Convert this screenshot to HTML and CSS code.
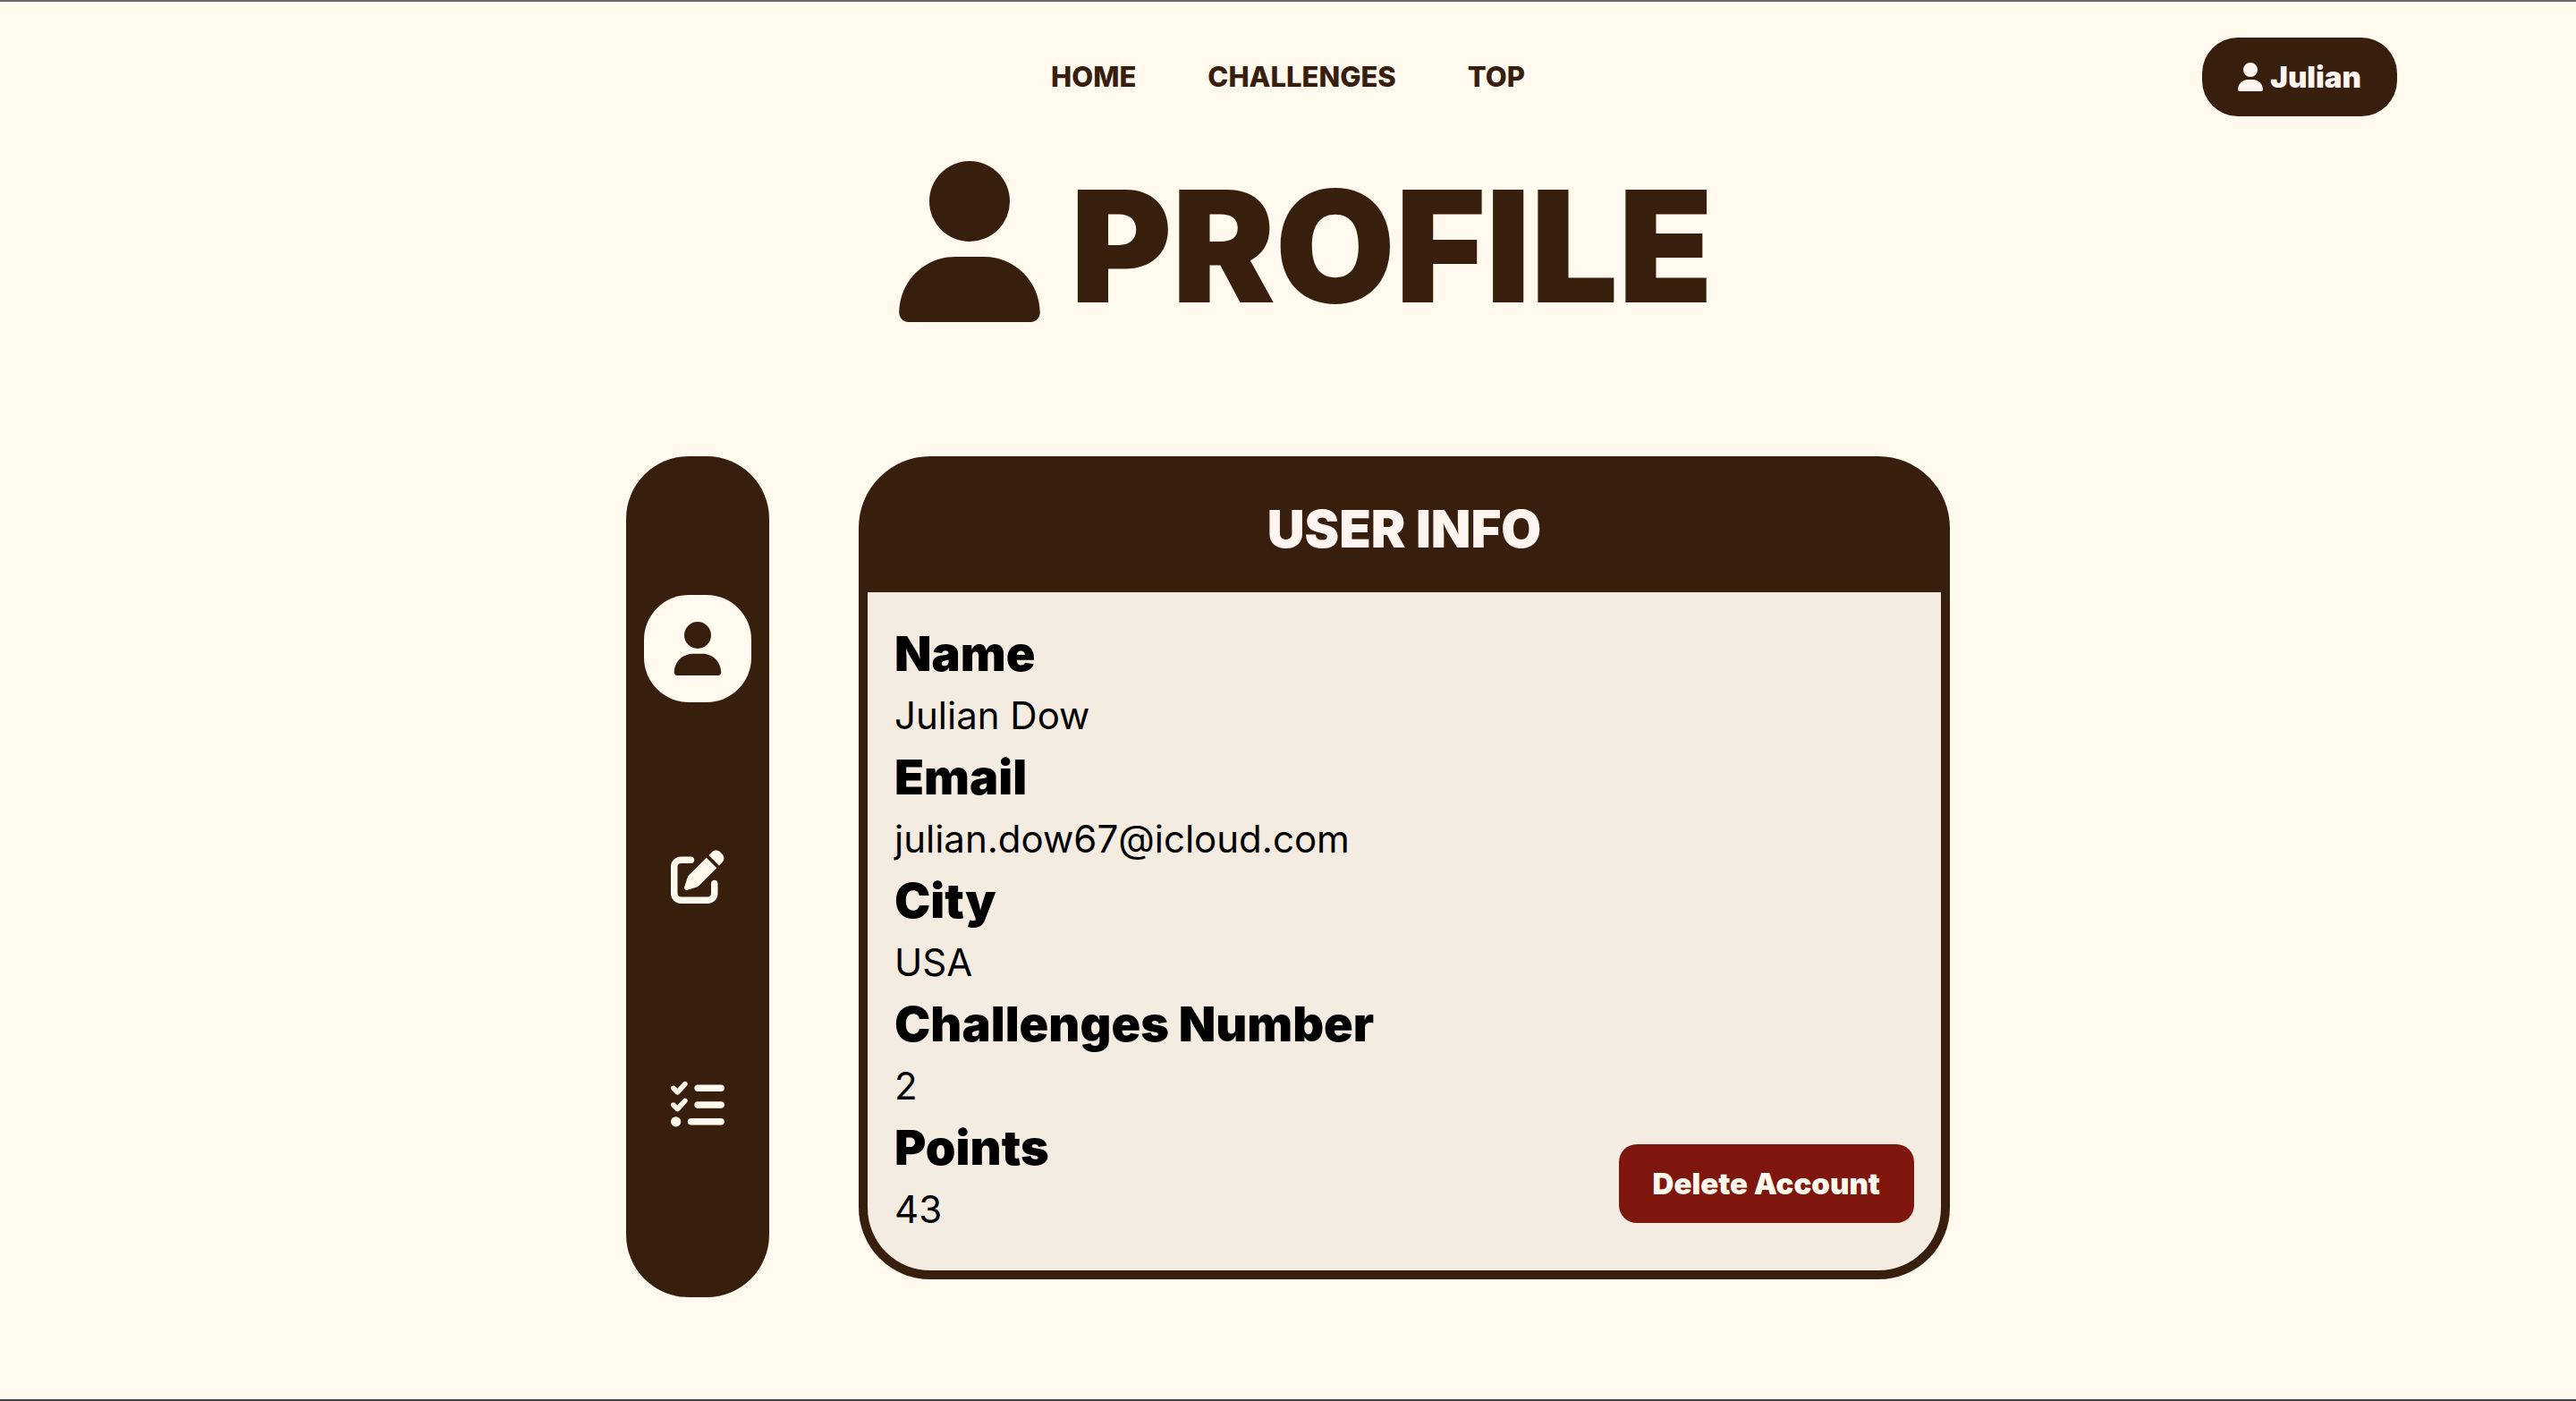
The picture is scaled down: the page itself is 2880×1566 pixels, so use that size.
FILE: index.html
```html
<!DOCTYPE html>
<html lang="en">
<head>
  <meta charset="utf-8">
  <meta name="viewport" content="width=device-width, initial-scale=1">
  <title>Profile</title>
  <link rel="stylesheet" href="styles.css">
</head>
<body class="page">
  <svg width="0" height="0" class="sprite" aria-hidden="true">
    <symbol id="icon-user" viewBox="0 0 448 512"><path d="M224 256A128 128 0 1 0 224 0a128 128 0 1 0 0 256zm-45.700 48C79.800 304 0 383.800 0 482.300C0 498.700 13.300 512 29.700 512H418.300c16.400 0 29.700-13.300 29.700-29.700C448 383.800 368.200 304 269.700 304H178.300z"/></symbol>
    <symbol id="icon-edit" viewBox="0 0 512 512"><path d="M471.600 21.700c-21.900-21.900-57.300-21.900-79.200 0L362.300 51.700l97.900 97.900 30.100-30.100c21.900-21.900 21.900-57.300 0-79.200L471.600 21.700zm-299.200 220c-6.100 6.100-10.800 13.600-13.500 21.900l-29.600 88.800c-2.900 8.600-.6 18.100 5.800 24.600s15.900 8.700 24.600 5.800l88.800-29.600c8.200-2.700 15.700-7.400 21.900-13.500L437.700 172.300 339.700 74.300 172.400 241.700zM96 64C43 64 0 107 0 160V416c0 53 43 96 96 96H352c53 0 96-43 96-96V320c0-17.700-14.300-32-32-32s-32 14.300-32 32v96c0 17.700-14.300 32-32 32H96c-17.700 0-32-14.300-32-32V160c0-17.700 14.300-32 32-32h96c17.700 0 32-14.300 32-32s-14.300-32-32-32H96z"/></symbol>
    <symbol id="icon-list" viewBox="0 0 512 512"><path d="M152.100 38.200c9.900 8.900 10.700 24 1.800 33.900l-72 80c-4.400 4.900-10.600 7.800-17.200 7.900s-12.900-2.400-17.600-7L7 113C-2.300 103.600-2.300 88.400 7 79s24.600-9.400 33.900 0l22.100 22.100 55.100-61.200c8.900-9.900 24-10.700 33.900-1.800zm0 160c9.900 8.900 10.700 24 1.800 33.900l-72 80c-4.400 4.900-10.600 7.800-17.200 7.900s-12.900-2.400-17.600-7L7 273c-9.400-9.400-9.400-24.600 0-33.900s24.600-9.400 33.900 0l22.100 22.100 55.100-61.200c8.900-9.900 24-10.700 33.900-1.800zM224 96c0-17.700 14.300-32 32-32H480c17.700 0 32 14.300 32 32s-14.300 32-32 32H256c-17.700 0-32-14.300-32-32zm0 160c0-17.700 14.300-32 32-32H480c17.700 0 32 14.300 32 32s-14.300 32-32 32H256c-17.700 0-32-14.300-32-32zM160 416c0-17.700 14.300-32 32-32H480c17.700 0 32 14.300 32 32s-14.300 32-32 32H192c-17.700 0-32-14.300-32-32zM48 368a48 48 0 1 1 0 96 48 48 0 1 1 0-96z"/></symbol>
  </svg>

  <header class="topbar">
    <nav class="menu" aria-label="Main">
      <a class="menu-link" href="#home">HOME</a>
      <a class="menu-link" href="#challenges">CHALLENGES</a>
      <a class="menu-link" href="#top">TOP</a>
    </nav>
    <button class="user-button" type="button">
      <svg class="user-button-icon" aria-hidden="true"><use href="#icon-user"/></svg>
      <span>Julian</span>
    </button>
  </header>

  <h1 class="title">
    <svg class="title-icon" aria-hidden="true"><use href="#icon-user"/></svg>
    <span>PROFILE</span>
  </h1>

  <main class="profile">
    <nav class="tabs" aria-label="Profile sections">
      <button class="tab tab-active" type="button" aria-label="User info"><svg class="tab-icon" aria-hidden="true"><use href="#icon-user"/></svg></button>
      <button class="tab" type="button" aria-label="Edit profile"><svg class="tab-icon" aria-hidden="true"><use href="#icon-edit"/></svg></button>
      <button class="tab" type="button" aria-label="My challenges"><svg class="tab-icon" aria-hidden="true"><use href="#icon-list"/></svg></button>
    </nav>

    <section class="card">
      <h2 class="card-title">USER INFO</h2>
      <div class="card-body">
        <dl class="info">
          <dt class="info-label">Name</dt>
          <dd class="info-value">Julian Dow</dd>
          <dt class="info-label">Email</dt>
          <dd class="info-value">julian.dow67@icloud.com</dd>
          <dt class="info-label">City</dt>
          <dd class="info-value">USA</dd>
          <dt class="info-label">Challenges Number</dt>
          <dd class="info-value">2</dd>
          <dt class="info-label">Points</dt>
          <dd class="info-value">43</dd>
        </dl>
        <button class="delete-button" type="button">Delete Account</button>
      </div>
    </section>
  </main>
</body>
</html>
```
FILE: styles.css
```css
:root {
  --brown: #371e0d;
  --cream: #fff9ee;
  --blush: #fff5f0;
  --sand: #f5ece1;
  --red: #7f160d;
}

*,
*::before,
*::after {
  box-sizing: border-box;
}

.page {
  margin: 0;
  min-height: 100vh;
  border-top: 2px solid #6b6767;
  border-bottom: 2px solid #404147;
  background: var(--cream);
  color: #000;
  font-family: Inter, "Open Sans", sans-serif;
}

.sprite {
  display: none;
}

svg {
  display: block;
  fill: currentColor;
}

button {
  border: 0;
  font: inherit;
  cursor: pointer;
}

.topbar {
  display: grid;
  grid-template-columns: 1fr auto 1fr;
  align-items: center;
  padding: 40px 200px 0;
}

.menu {
  grid-column: 2;
  display: flex;
  gap: 80px;
}

.menu-link {
  color: var(--brown);
  font-size: 31px;
  font-weight: 800;
  line-height: 48px;
  text-decoration: none;
}

.user-button {
  justify-self: end;
  display: flex;
  align-items: center;
  gap: 8px;
  padding: 20px 40px;
  border-radius: 40px;
  background: var(--brown);
  color: var(--blush);
  font-size: 33px;
  font-weight: 900;
  line-height: 48px;
}

.user-button-icon {
  width: 28px;
  height: 32px;
}

.title {
  display: flex;
  justify-content: center;
  gap: 34px;
  margin: 50px 0 140px;
  padding-left: 40px;
  color: var(--brown);
  font-size: 173px;
  font-weight: 900;
  line-height: 190px;
}

.title-icon {
  width: 158px;
  height: 180px;
}

.profile {
  display: flex;
  align-items: flex-start;
  gap: 100px;
  max-width: 1480px;
  margin: 0 auto;
}

.tabs {
  display: flex;
  flex-direction: column;
  gap: 135px;
  padding: 155px 20px;
  border-radius: 70px;
  background: var(--brown);
}

.tab {
  display: grid;
  place-items: center;
  width: 120px;
  height: 120px;
  padding: 0;
  border-radius: 50px;
  background: transparent;
  color: var(--cream);
}

.tab-active {
  background: var(--cream);
  color: var(--brown);
}

.tab-icon {
  width: 60px;
  height: 60px;
}

.card {
  flex: 1;
  padding: 10px;
  border-radius: 80px;
  background: var(--brown);
}

.card-title {
  margin: 0;
  padding: 26px 30px;
  color: var(--blush);
  font-size: 58px;
  font-weight: 900;
  line-height: 90px;
  text-align: center;
}

.card-body {
  display: flex;
  align-items: flex-end;
  justify-content: space-between;
  padding: 30px 30px 38px;
  border-radius: 0 0 70px 70px;
  background: var(--sand);
}

.info {
  margin: 0;
}

.info-label {
  font-size: 54px;
  font-weight: 900;
  line-height: 78px;
}

.info-value {
  margin: 0;
  font-size: 42px;
  line-height: 60px;
}

.delete-button {
  margin-bottom: 15px;
  padding: 20px 38px;
  border-radius: 20px;
  background: var(--red);
  color: var(--cream);
  font-size: 33px;
  font-weight: 900;
  line-height: 48px;
}
```
